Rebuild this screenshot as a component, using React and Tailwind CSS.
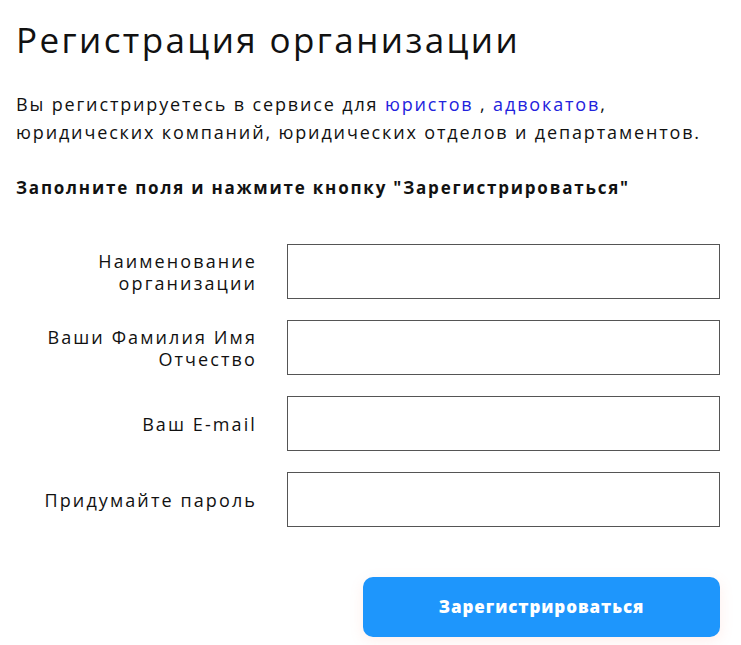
export default function App() {
  const fields = [
    ["Наименование", "организации"],
    ["Ваши Фамилия Имя", "Отчество"],
    ["Ваш E-mail"],
    ["Придумайте пароль"],
  ];

  return (
    <div className="bg-white min-h-screen pl-4 pr-[21px] pt-[14px] text-[#111] font-['Open_Sans',sans-serif]">
      {/* Title */}
      <h1 className="text-[35px] leading-[52px] font-normal tracking-[2.4px]">Регистрация организации</h1>

      <p className="mt-[24px] text-[18px] leading-[28px] tracking-[1.85px]">
        Вы регистрируетесь в сервисе для <a className="text-[#2222dd]">юристов</a> ,{" "}
        <a className="text-[#2222dd]">адвокатов</a>,
        <br />
        юридических компаний, юридических отделов и департаментов.
      </p>

      <p className="mt-[30px] text-[17px] leading-[24px] font-bold tracking-[1.8px]">
        Заполните поля и нажмите кнопку "Зарегистрироваться"
      </p>

      {/* Form */}
      <form className="mt-[44px] flex flex-col gap-[21px]">
        {fields.map((lines, i) => (
          <div key={i} className="flex items-center">
            <label className="w-[241px] text-right text-[18px] leading-[22px] tracking-[2.1px]">
              {lines.map((l, j) => (
                <div key={j}>{l}</div>
              ))}
            </label>
            <input
              type="text"
              className="ml-[30px] flex-1 h-[55px] border border-[#555] bg-white focus:outline-none"
            />
          </div>
        ))}

        <div className="flex justify-end mt-[29px]">
          <button
            type="button"
            className="w-[357px] h-[60px] rounded-[10px] bg-[#1e96fc] text-white text-[17px] font-extrabold tracking-[0.9px] shadow-[0_4px_14px_rgba(255,140,120,0.15)]"
          >
            Зарегистрироваться
          </button>
        </div>
      </form>
    </div>
  );
}
